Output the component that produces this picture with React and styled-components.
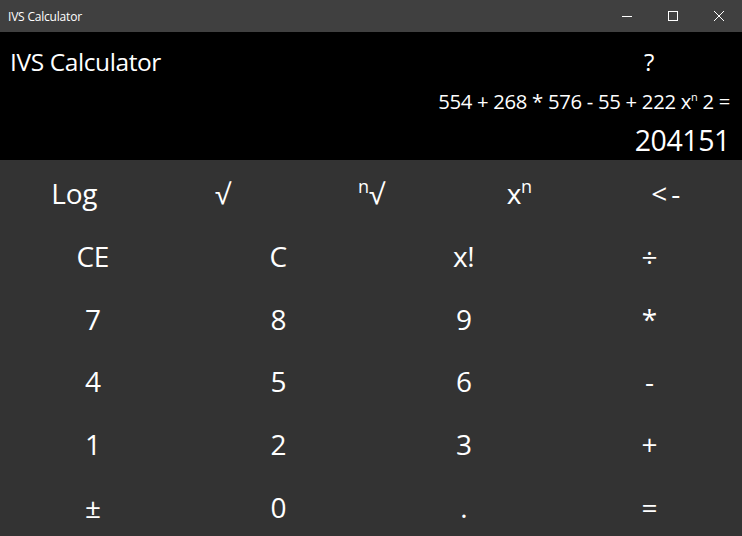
import React, { useState } from "react"
import styled, { createGlobalStyle } from "styled-components"

const GlobalStyle = createGlobalStyle`
  html, body {
    margin: 0;
    padding: 0;
    background: #333333;
  }
  body {
    font-family: "Open Sans", "Noto Sans", sans-serif;
    color: #ffffff;
  }
`

const Window = styled.div`
  width: 742px;
  height: 536px;
  display: flex;
  flex-direction: column;
  background: #333333;
  overflow: hidden;
`

const TitleBar = styled.div`
  height: 32px;
  flex: none;
  display: flex;
  align-items: center;
  background: #404040;
  .caption {
    flex: 1;
    padding-left: 8px;
    font-size: 12px;
    letter-spacing: -0.2px;
    color: #ffffff;
  }
`

const WinButton = styled.div`
  width: 46px;
  height: 32px;
  display: flex;
  align-items: center;
  justify-content: center;
`

const Display = styled.div`
  height: 128px;
  flex: none;
  background: #000000;
  display: grid;
  grid-template-columns: repeat(4, 1fr);
  grid-template-rows: 58px 30px 40px;
  .app-title {
    grid-column: 1 / 4;
    align-self: center;
    padding-left: 10px;
    font-size: 24.5px;
    letter-spacing: -0.4px;
  }
  .help {
    align-self: center;
    text-align: center;
    font-size: 24px;
    cursor: pointer;
  }
  .expression {
    grid-column: 1 / 5;
    text-align: right;
    padding-right: 12px;
    font-size: 20.3px;
    letter-spacing: -0.3px;
    align-self: center;
    margin-top: -9px;
    sup {
      font-size: 11px;
      vertical-align: 8px;
      line-height: 0;
    }
  }
  .result {
    grid-column: 1 / 5;
    text-align: right;
    padding-right: 12px;
    font-size: 28.5px;
    letter-spacing: -0.4px;
    align-self: center;
    line-height: 1;
    margin-top: 1px;
  }
`

const Pad = styled.div`
  flex: 1;
  display: grid;
  grid-template-rows: repeat(6, 1fr);
`

const Row = styled.div`
  display: grid;
  grid-template-columns: repeat(${p => p.cols}, 1fr);
`

const Key = styled.button`
  border: none;
  background: transparent;
  color: #ffffff;
  font-family: "Open Sans", "Noto Sans", sans-serif;
  font-size: 28px;
  letter-spacing: ${p => p.spread || "-0.3px"};
  padding: 4px 0 0 0;
  cursor: pointer;
  display: flex;
  align-items: center;
  justify-content: center;
  sup {
    font-size: 18px;
    line-height: 0;
    vertical-align: 11px;
    letter-spacing: 0;
  }
  &:hover {
    background: #3d3d3d;
  }
`

const topKeys = [
  { label: "Log" },
  { label: "√" },
  { label: <><sup>n</sup>√</> },
  { label: <>x<sup>n</sup></> },
  { label: "<-", spread: "4px" },
]

const keys = [
  ["CE", "C", "x!", "÷"],
  ["7", "8", "9", "*"],
  ["4", "5", "6", "-"],
  ["1", "2", "3", "+"],
  ["±", "0", ".", "="],
]

const App = () => {
  const [result] = useState("204151")
  return (
    <Window>
      <GlobalStyle />
      <TitleBar>
        <span className="caption">IVS Calculator</span>
        <WinButton>
          <svg width="10" height="10" viewBox="0 0 10 10">
            <path d="M0 5.5h10" stroke="#fff" strokeWidth="1" />
          </svg>
        </WinButton>
        <WinButton>
          <svg width="10" height="10" viewBox="0 0 10 10">
            <rect x="0.5" y="0.5" width="9" height="9" fill="none" stroke="#fff" strokeWidth="1" />
          </svg>
        </WinButton>
        <WinButton>
          <svg width="10" height="10" viewBox="0 0 10 10">
            <path d="M0 0L10 10M10 0L0 10" stroke="#fff" strokeWidth="1" />
          </svg>
        </WinButton>
      </TitleBar>
      <Display>
        <div className="app-title">IVS Calculator</div>
        <div className="help">?</div>
        <div className="expression">
          554 + 268 * 576 - 55 + 222 x<sup>n</sup> 2 =
        </div>
        <div className="result">{result}</div>
      </Display>
      <Pad>
        <Row cols={5}>
          {topKeys.map((k, i) => (
            <Key key={`top-${i}`} spread={k.spread}>
              <span>{k.label}</span>
            </Key>
          ))}
        </Row>
        {keys.map((row, r) => (
          <Row cols={4} key={`row-${r}`}>
            {row.map(k => (
              <Key key={k}>
                <span>{k}</span>
              </Key>
            ))}
          </Row>
        ))}
      </Pad>
    </Window>
  )
}

export default App
